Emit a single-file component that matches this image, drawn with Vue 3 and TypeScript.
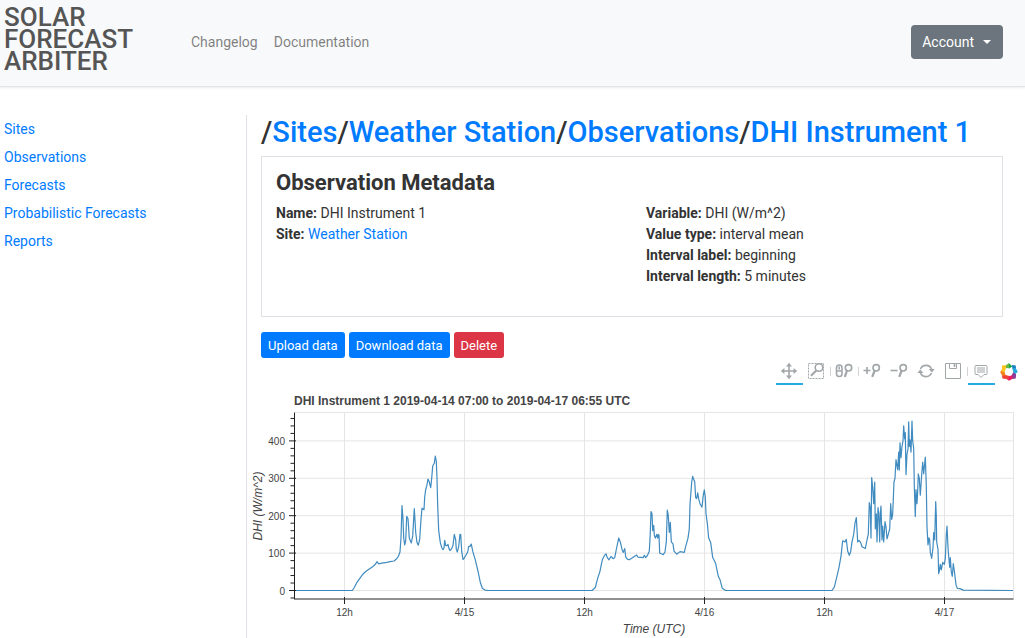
<script setup lang="ts">
interface Crumb { label: string; href: string }
interface Field { label: string; value: string; href?: string }
interface Tick { pos: number; label: string }

const sideLinks: string[] = ['Sites', 'Observations', 'Forecasts', 'Probabilistic Forecasts', 'Reports']

const crumbs: Crumb[] = [
  { label: 'Sites', href: '#sites' },
  { label: 'Weather Station', href: '#weather-station' },
  { label: 'Observations', href: '#observations' },
  { label: 'DHI Instrument 1', href: '#dhi-instrument-1' },
]

const leftFields: Field[] = [
  { label: 'Name:', value: 'DHI Instrument 1' },
  { label: 'Site:', value: 'Weather Station', href: '#weather-station' },
]
const rightFields: Field[] = [
  { label: 'Variable:', value: 'DHI (W/m^2)' },
  { label: 'Value type:', value: 'interval mean' },
  { label: 'Interval label:', value: 'beginning' },
  { label: 'Interval length:', value: '5 minutes' },
]

// Plot frame inside the chart's viewBox
const left = 47.5
const right = 766.5
const top = 27.5
const bottom = 214
const zero = 205.5
const perWatt = 0.374

const yOf = (v: number): number => zero - v * perWatt

const xTicks: Tick[] = ['12h', '4/15', '12h', '4/16', '12h', '4/17'].map((label, i) => ({
  label,
  pos: 97.5 + i * 120,
}))
const yTicks: Tick[] = [0, 100, 200, 300, 400].map((v) => ({ label: String(v), pos: yOf(v) }))
const yMinor: number[] = Array.from({ length: 25 }, (_, i) => (i - 1) * 20)
  .filter((v) => v % 100 !== 0)
  .map(yOf)

// Pairs: horizontal offset from the frame's left edge, irradiance in W/m^2
const series = `0 0 58.3 0 60.3 8 63 22 66 33 69.3 45 72.7 53 76 59 79.3 65 81.3 70 83 77 84.7 71 87.7 73 92.7 75 96 77
100 79 102.7 85 104.3 91 106 103 107 141 108 227 109 190 109.7 140 110.7 122 111.7 133 112.7 198 114 192 115.3 140
117.3 127 118.7 146 120.3 219 121.7 155 123 128 124.3 121 125.7 137 127 190 128 220 130 216 130.7 250 131.7 270
132.7 279 134 298 135.3 290 136.7 275 137.7 300 138.7 333 140.3 340 141.3 359 142.3 345 143 300 143.7 225 144.7 160
146.3 128 147.7 115 149 109 150 114 150.7 134 151.7 120 153 120 154 123 155 112 156 107 157.7 112 159 121 160.3 150
161.7 135 162.3 110 163.3 103 164.7 118 166 150 166.7 150 167.7 105 169 83 170.3 87 172 95 173.7 103 174.7 118
176 118 177.3 124 178.7 105 181.3 82 184.3 48 186.3 22 188.3 6 191 1 194.3 0
298 0 301.3 8 303.7 33 306 52 308.3 82 310.3 93 312 98 313.3 88 315 82 317 91 319.3 85 320.7 88 322.7 115 324.7 140
326.3 130 328 110 329.3 102 330.7 112 331.7 90 333.3 84 335.3 82 337.7 86 340.3 91 342.7 95 344 89 349.3 88
350.3 94 351.7 88 353.3 93 355.3 105 356.3 155 357 211 358 205 358.7 160 359.7 174 360.3 148 361.3 140 362.7 150
363.7 140 364.3 150 365 148 365.7 100 367.3 98 369.3 96 371 103 372.3 130 373.3 215 374.3 200 375.3 155 376.3 182
377.3 130 379 125 380 105 382.7 97 386 104 390.3 102 391.7 118 394 140 395.3 165 396 230 397.7 290 398.7 305
400.7 290 401.7 248 402.7 246 403.7 261 404.7 245 406 232 408 223 409.3 255 410.3 269 411.3 250 412 205 413.3 180
414.7 140 416.7 128 418.7 88 421.7 72 424.3 38 426 29 428.3 6 431.7 0
538 0 540.3 9 542.7 35 545 62 547 92 548.7 133 551 130 552.3 137 553.7 105 555.3 94 556.7 104 558 130 559.7 150
561 180 562.3 195 563.7 130 565 134 566.7 128 568 117 571.3 112 573 135 574.3 150 575.3 235 576.3 220 577 140
577.7 302 578.7 275 579.7 232 580.7 290 581.3 165 582.3 205 583 130 584 222 584.7 208 585.7 130 586.3 205 587 226
588 135 588.7 172 589.7 130 591 184 592 170 593 138 594.3 150 595.7 165 596.7 232 597.7 190 598.7 205 600 290
601 300 602 350 603.7 323 604.7 370 605.3 322 606 395 607 355 608 385 609 400 609.7 440 610.7 405 611.3 422 612 310
613 365 614 378 614.7 451 615.3 385 616 403 617 370 618 453 618.7 400 619.7 380 620.3 280 621.3 198 622 270 623 232
623.7 265 624.3 312 625.3 300 626.3 255 627.7 310 628.7 343 629.7 312 631.3 357 632.3 280 633 170 634 122 635 141
635.7 135 636.3 102 637.7 86 639 115 639.7 155 640.7 135 641.7 238 642.3 200 642.7 130 644 110 644.7 45 645.3 52
646.3 70 647.3 55 648.7 75 650.3 70 651.3 85 652.3 150 653 172 654 115 654.7 90 655.7 62 656.3 88 657.3 50 658.3 38
659.3 72 660.7 45 662 15 663.3 6 666 5 669.3 1 719 0`
  .trim()
  .split(/\s+/)
  .map(Number)

const linePoints: string = Array.from({ length: series.length / 2 }, (_, i) => {
  const x = 47 + series[i * 2]
  return `${x.toFixed(1)},${yOf(series[i * 2 + 1]).toFixed(1)}`
}).join(' ')
</script>

<template>
  <div class="page">
    <header class="topbar">
      <a class="brand" href="#home">Solar<br />Forecast<br />Arbiter</a>
      <nav class="topnav" aria-label="Main">
        <a href="#changelog">Changelog</a>
        <a href="#documentation">Documentation</a>
      </nav>
      <button type="button" class="account">Account<span class="caret"></span></button>
    </header>

    <div class="body">
      <nav class="sidebar" aria-label="Sections">
        <a v-for="l in sideLinks" :key="l" :href="'#' + l">{{ l }}</a>
      </nav>

      <main class="main">
        <div class="content">
          <h1 class="crumbs">
            <template v-for="c in crumbs" :key="c.label">/<a :href="c.href">{{ c.label }}</a></template>
          </h1>

          <section class="card">
            <h2>Observation Metadata</h2>
            <div class="columns">
              <ul v-for="(group, g) in [leftFields, rightFields]" :key="g">
                <li v-for="f in group" :key="f.label">
                  <b>{{ f.label }}</b>{{ ' ' }}<a v-if="f.href" :href="f.href">{{ f.value }}</a
                  ><template v-else>{{ f.value }}</template>
                </li>
              </ul>
            </div>
          </section>

          <div class="actions">
            <button type="button">Upload data</button>
            <button type="button">Download data</button>
            <button type="button" class="danger">Delete</button>
          </div>
        </div>

        <div class="toolbar" role="toolbar" aria-label="Plot tools">
          <button type="button" class="tool active" aria-label="Pan">
            <svg viewBox="0 0 18 18">
              <path d="M9 3v12M3 9h12" class="s2" />
              <path d="M9 .8l3 3.600H6zM9 17.200l3-3.600H6zM.8 9l3.600-3v6zM17.200 9l-3.600-3v6z" class="f" />
            </svg>
          </button>
          <button type="button" class="tool" aria-label="Box zoom">
            <svg viewBox="0 0 18 18">
              <path d="M1.500 1.500h15v15h-15z" class="dash" />
              <circle cx="12" cy="5.500" r="3.800" class="s2 white" />
              <path d="M9.200 8.400L4 13.800" class="s3" />
            </svg>
          </button>
          <span class="sep"></span>
          <button type="button" class="tool" aria-label="Wheel zoom">
            <svg viewBox="0 0 18 18">
              <rect x="1.500" y="3" width="5.500" height="11.500" rx="2.700" class="s2" />
              <path d="M4.200 4.500v3M1.500 9h5.500" class="s2" />
              <circle cx="13.500" cy="5.800" r="3.200" class="s2" />
              <path d="M12 8.500L9.800 14.800" class="s3" />
            </svg>
          </button>
          <span class="sep"></span>
          <button type="button" class="tool" aria-label="Zoom in">
            <svg viewBox="0 0 18 18">
              <path d="M.5 8.500h7M4 5v7" class="s2" />
              <circle cx="13.200" cy="5.800" r="3.200" class="s2" />
              <path d="M11.700 8.500L9.200 14.800" class="s3" />
            </svg>
          </button>
          <button type="button" class="tool" aria-label="Zoom out">
            <svg viewBox="0 0 18 18">
              <path d="M.5 8.500h7" class="s2" />
              <circle cx="13.200" cy="5.800" r="3.200" class="s2" />
              <path d="M11.700 8.500L9.200 14.800" class="s3" />
            </svg>
          </button>
          <button type="button" class="tool" aria-label="Reset">
            <svg viewBox="0 0 18 18">
              <path d="M3.500 7A6 6 0 0 1 14.700 7.500M14.500 11A6 6 0 0 1 3.300 10.500" class="s2" />
              <path d="M11.700 7h6L15 10.500zM.4 11h6L3.200 7.500z" class="f" />
            </svg>
          </button>
          <button type="button" class="tool" aria-label="Save">
            <svg viewBox="0 0 18 18">
              <path d="M1.500 1.500h15v15h-15zM5.500 1.500v5h7v-5" class="s1" />
              <path d="M10.500 2v3" class="s2" />
            </svg>
          </button>
          <span class="sep"></span>
          <button type="button" class="tool active" aria-label="Hover">
            <svg viewBox="0 0 18 18">
              <path d="M4 3.500h10q1 0 1 1v7q0 1-1 1h-2L9 15.500l-3-3H4q-1 0-1-1v-7q0-1 1-1z" class="s1" />
              <path d="M5 5h8v6H5z" class="pale" />
            </svg>
          </button>
          <a class="logo" href="#bokeh" aria-label="Bokeh">
            <svg viewBox="0 0 18 18">
              <path d="M9 .3L12.500 3.500 9 5.500 5.500 3.600z" fill="#0aa64f" />
              <path d="M9 .3L9.500 4.800 5.800 5.200 5.600 2.400z" fill="#6ab83f" />
              <path d="M12 2l3.800.4.2 4-3.600-.6z" fill="#1b7ec2" />
              <path d="M12.400 5.800l3.300-.8L17.800 9l-3.400 2.500-1.200-2.700z" fill="#25a9e0" />
              <path d="M13.300 9.300l2.800 2-.3 4.200-3.600.5-.7-3.600z" fill="#8e3d96" />
              <path d="M9 13l3.300-.5.2 3.300L9 17.800 6 15.400z" fill="#ed1c63" />
              <path d="M5.600 12l3.600 1-.9 3.300-6-.7-.3-3.900z" fill="#ef4237" />
              <path d="M4.700 8.900l.9 3.300-3.500.5L.2 9l2.300-3z" fill="#f58220" />
              <path d="M5.700 5.500L4.600 9 1.800 8.400l.3-6 4-.1z" fill="#fcc41b" />
            </svg>
          </a>
        </div>

        <svg class="chart" viewBox="0 0 778 252" role="img" aria-label="DHI Instrument 1">
          <g class="grid">
            <path v-for="t in xTicks" :key="'gx' + t.pos" :d="`M${t.pos} ${top}V${bottom}`" />
            <path v-for="t in yTicks" :key="'gy' + t.pos" :d="`M${left} ${t.pos}H${right}`" />
            <path :d="`M${left} ${top}H${right}V${bottom}`" />
          </g>
          <polyline class="line" :points="linePoints" />
          <g class="axis">
            <path :d="`M${left} ${top}V${bottom}`" />
            <path class="base" :d="`M47 ${bottom}H${right}`" />
            <path v-for="t in yTicks" :key="'ty' + t.pos" :d="`M42 ${t.pos}h7`" />
            <path v-for="y in yMinor" :key="'my' + y" :d="`M43.500 ${y}h4`" />
            <path v-for="t in xTicks" :key="'tx' + t.pos" :d="`M${t.pos} 212v7`" />
          </g>
          <text class="title" x="47" y="20">DHI Instrument 1 2019-04-14 07:00 to 2019-04-17 06:55 UTC</text>
          <text v-for="t in yTicks" :key="'ly' + t.pos" class="tick end" x="38" :y="t.pos + 4">{{ t.label }}</text>
          <text v-for="t in xTicks" :key="'lx' + t.pos" class="tick mid" :x="t.pos" y="231">{{ t.label }}</text>
          <text class="label mid" x="407" y="248">Time (UTC)</text>
          <text class="label mid" transform="translate(15 121) rotate(-90)">DHI (W/m^2)</text>
        </svg>
      </main>
    </div>
  </div>
</template>

<style>
body {
  margin: 0;
  background: #fff;
}
</style>

<style scoped>
.page {
  min-height: 100vh;
  box-sizing: border-box;
  display: flex;
  flex-direction: column;
  font: 14px/21px Roboto, 'Liberation Sans', sans-serif;
  color: #333;
}
a {
  color: #007bff;
  text-decoration: none;
}
button {
  font-family: inherit;
  border: 0;
  cursor: pointer;
}
.topbar {
  display: flex;
  align-items: center;
  box-sizing: border-box;
  height: 87px;
  padding: 0 22px 2px 4px;
  background: #f8f9fa;
  border-bottom: 1px solid #e3e4e5;
  box-shadow: 0 1px 2px rgba(0, 0, 0, 0.08);
}
.brand {
  width: 180px;
  padding-bottom: 7px;
  font-size: 26px;
  line-height: 22px;
  font-weight: 500;
  text-transform: uppercase;
  color: #555;
}
.topnav {
  display: flex;
  gap: 16px;
  padding-left: 7px;
}
.topnav a {
  color: rgba(0, 0, 0, 0.5);
}
.account {
  display: flex;
  align-items: center;
  gap: 9px;
  height: 34px;
  margin-left: auto;
  padding: 0 12px 0 11px;
  border-radius: 4px;
  background: #6c757d;
  color: #fff;
  font-size: 14px;
}
.caret {
  border: 4px solid transparent;
  border-top-color: #fff;
  border-bottom: 0;
}
.body {
  flex: 1;
  display: grid;
  grid-template-columns: 246px minmax(0, 1fr);
  padding-top: 28px;
}
.sidebar {
  display: flex;
  flex-direction: column;
  gap: 7px;
  padding: 4px;
}
.main {
  border-left: 1px solid #dee2e6;
}
.content {
  padding: 0 22px 0 14px;
}
.crumbs {
  margin: 0;
  font-size: 29px;
  line-height: 34px;
  font-weight: 500;
  padding-bottom: 7px;
}
.card {
  box-sizing: border-box;
  min-height: 161px;
  border: 1px solid #dee2e6;
  padding-top: 13px;
}
.card h2 {
  margin: 0;
  padding: 0 14px 7px;
  font-size: 22px;
  line-height: 26px;
  font-weight: 700;
}
.columns {
  display: grid;
  grid-template-columns: 1fr 1fr;
}
.columns ul {
  list-style: none;
  margin: 0;
  padding: 0 14px;
}
.actions {
  display: flex;
  gap: 4px;
  padding-top: 15px;
}
.actions button {
  height: 26px;
  padding: 0 7px;
  border-radius: 3px;
  background: #007bff;
  color: #fff;
  font-size: 13px;
}
.actions .danger {
  background: #dc3545;
}
.toolbar {
  display: flex;
  justify-content: flex-end;
  padding-right: 7px;
}
.tool {
  box-sizing: border-box;
  width: 27px;
  height: 27px;
  padding: 4px 4px 3px;
  background: none;
  border-bottom: 2px solid transparent;
}
.tool.active {
  border-bottom-color: #26aae1;
}
.toolbar svg {
  display: block;
  width: 18px;
  height: 18px;
}
.sep {
  width: 1px;
  height: 9px;
  margin-top: 9px;
  background: #d3d3d3;
}
.logo {
  padding: 5px 0 0 5px;
}
.s1,
.s2,
.s3,
.dash {
  fill: none;
  stroke: #a1a6a9;
  stroke-width: 1px;
}
.s2 {
  stroke-width: 1.6px;
}
.s3 {
  stroke-width: 2.2px;
}
.dash {
  stroke-dasharray: 2 1;
}
.white {
  fill: #fff;
}
.f {
  fill: #a1a6a9;
}
.pale {
  fill: #d0d2d4;
}
.chart {
  display: block;
  width: 100%;
  height: auto;
  font-family: 'Liberation Sans', Arial, sans-serif;
}
.grid path {
  fill: none;
  stroke: #e5e5e5;
}
.axis path {
  fill: none;
  stroke: #222;
}
.line {
  fill: none;
  stroke: #1f77b4;
  stroke-opacity: 0.85;
  stroke-width: 1.2px;
  stroke-linejoin: round;
}
.title {
  font-size: 12px;
  font-weight: 700;
  fill: #444;
}
.tick {
  font-size: 10px;
  fill: #444;
}
.label {
  font-size: 12px;
  font-style: italic;
  fill: #444;
}
.mid {
  text-anchor: middle;
}
.end {
  text-anchor: end;
}
</style>
